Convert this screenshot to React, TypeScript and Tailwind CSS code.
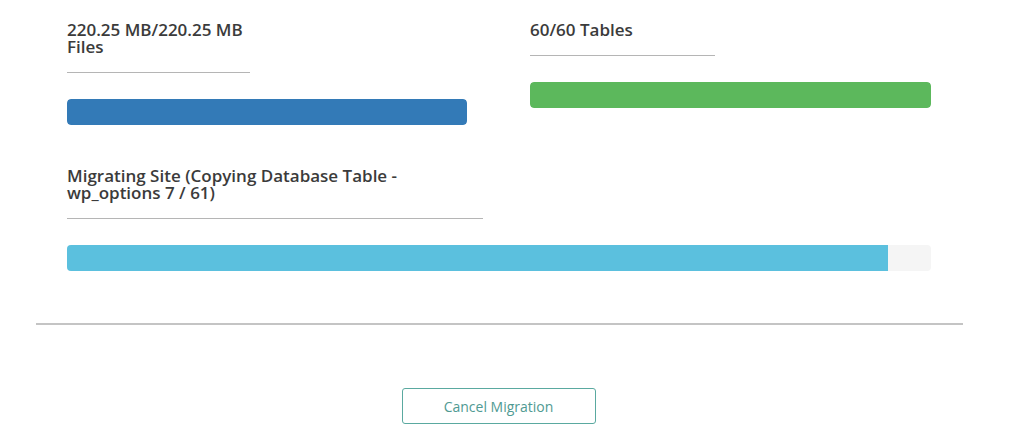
import React from 'react';

const font = { fontFamily: '"Open Sans", "Noto Sans", sans-serif' };

function Progress({ label, labelWidth, color, percent }: { label: string; labelWidth: string; color: string; percent: number }) {
  return (
    <div>
      <div className={`${labelWidth} border-b border-[#b5b5b5] pb-[17px] text-[17px] leading-[17px] font-semibold text-[#3b3b3b]`}>
        {label}
      </div>
      <div className="mt-[26px] h-[26px] rounded-[4px] bg-[#f5f5f5] overflow-hidden">
        <div className={`h-full ${color}`} style={{ width: `${percent}%` }} />
      </div>
    </div>
  );
}

export default function App() {
  return (
    <div className="w-[1024px] h-[431px] bg-white" style={font}>
      <div className="ml-[67px] w-[864px] pt-[21px]">
        <div className="grid grid-cols-[400px_401px] gap-[63px] items-start">
          <Progress label="220.25 MB/220.25 MB Files" labelWidth="w-[183px]" color="bg-[#337ab7] rounded-[4px]" percent={100} />
          <Progress label="60/60 Tables" labelWidth="w-[185px]" color="bg-[#5cb85c] rounded-[4px]" percent={100} />
        </div>
        <div className="mt-[42px]">
          <Progress
            label="Migrating Site (Copying Database Table - wp_options 7 / 61)"
            labelWidth="w-[416px]"
            color="bg-[#5bc0de]"
            percent={95}
          />
        </div>
      </div>
      <div className="ml-[36px] mt-[52px] w-[927px] border-t-2 border-[#c4c4c4]" />
      <div className="w-[997px] flex justify-center mt-[63px]">
        <button className="w-[194px] h-[36px] border border-[#5aa9a0] rounded-[3px] text-[14px] text-[#4f9a92] bg-white">
          Cancel Migration
        </button>
      </div>
    </div>
  );
}
